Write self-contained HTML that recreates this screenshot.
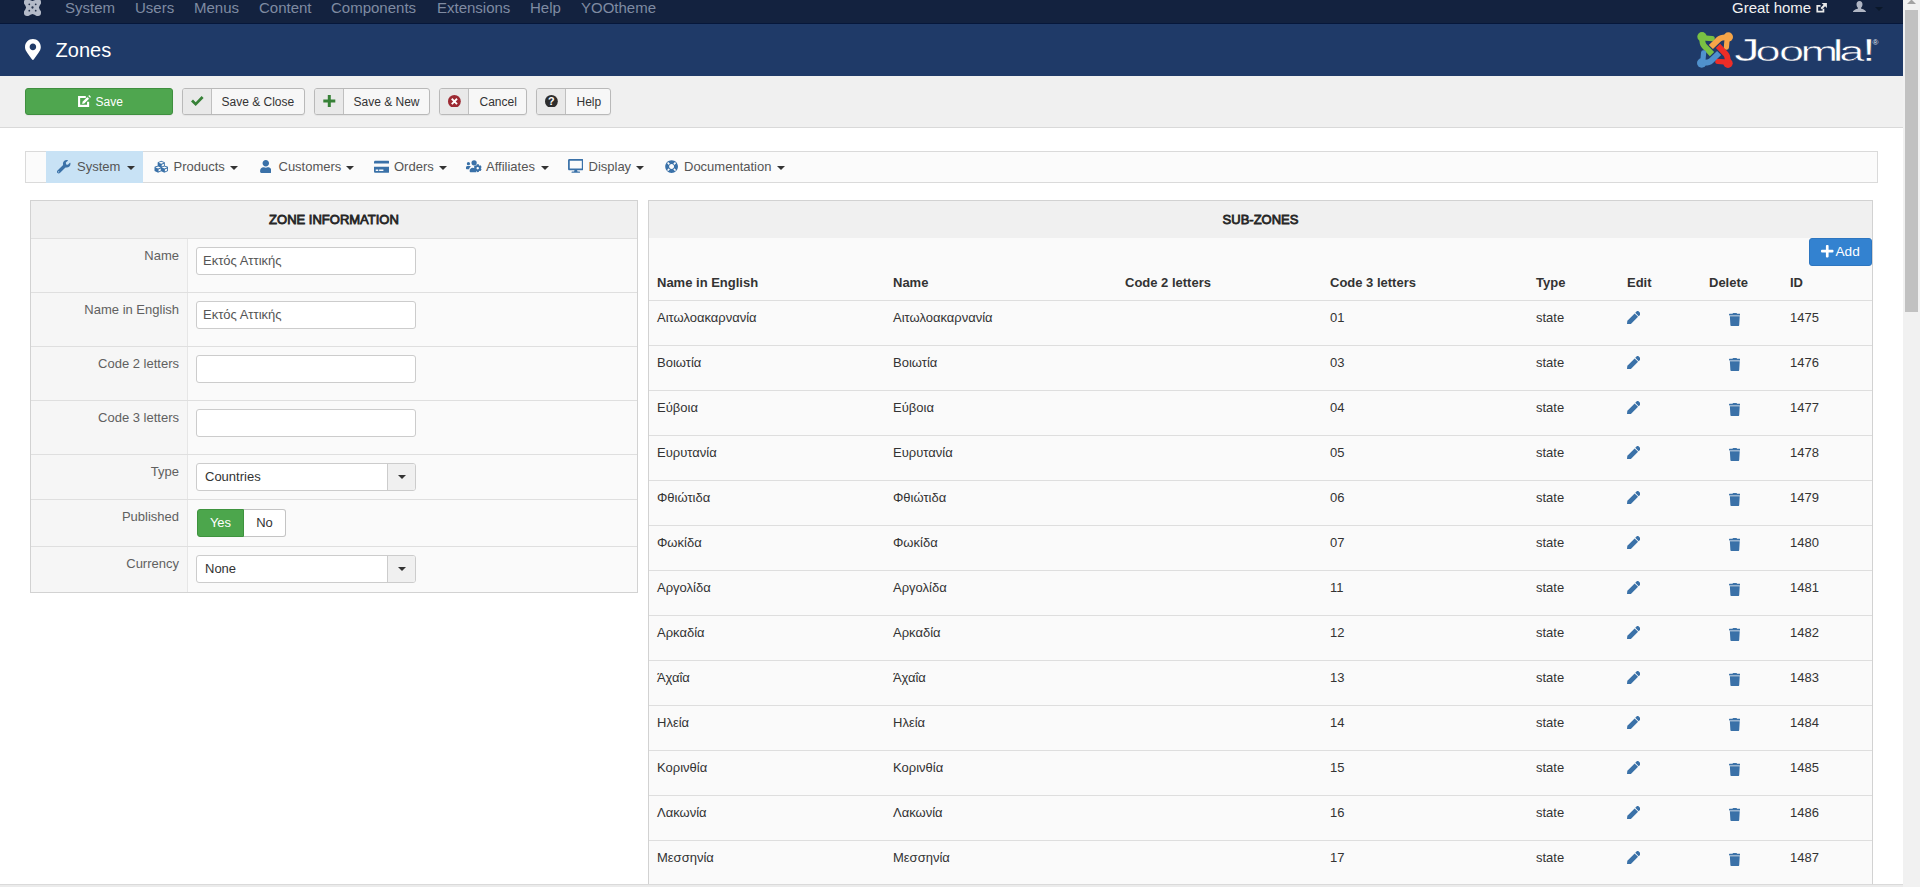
<!DOCTYPE html>
<html lang="en">
<head>
<meta charset="utf-8">
<title>Zones</title>
<style>
*{box-sizing:border-box;margin:0;padding:0}
html,body{width:1920px;height:887px;overflow:hidden;background:#fff}
body{font-family:"Liberation Sans",sans-serif;font-size:13px;color:#333;position:relative}
.abs{position:absolute}
svg{display:block}
/* top navbar */
#nav{left:0;top:0;width:1903px;height:24px;background:#13223f;border-bottom:1px solid #06173a;overflow:hidden}
#nav span.m{position:absolute;top:-3.2px;font-size:15px;line-height:22px;color:#7f8ba2;white-space:nowrap}
#nav span.w{color:#f2f2f2}
/* header */
#hdr{left:0;top:24px;width:1903px;height:52px;background:#1f3a68}
#hdr h1{position:absolute;left:55.6px;top:13.5px;font-size:20px;line-height:24px;font-weight:normal;color:#fff}
/* toolbar */
#tb{left:0;top:76px;width:1903px;height:52px;background:#f0f0f0;border-bottom:1px solid #d9d9d9}
.btn{position:absolute;top:12px;height:27px;border:1px solid #b9b9b9;border-radius:3px;background:#f7f7f7;font-size:12px;line-height:25px;color:#333;white-space:nowrap;box-shadow:0 1px 1px rgba(0,0,0,.05)}
.btn .ic{position:absolute;left:0;top:0;width:29px;height:25px;background:#e9e9e9;border-right:1px solid #bfbfbf;border-radius:2px 0 0 2px}
.btn .tx{position:absolute;top:1px}
.btn svg{position:absolute}
/* submenu */
#sub{left:25px;top:151px;width:1853px;height:32px;background:#fbfbfb;border:1px solid #dadada}
#sub .act{position:absolute;left:20px;top:-1px;width:97px;height:32px;background:#c8e2f5}
#sub .it{position:absolute;top:-0.5px;line-height:30px;font-size:13px;color:#555;white-space:nowrap}
#sub svg{position:absolute;fill:#3a71a8}
.caret{position:absolute;width:0;height:0;border-left:4px solid transparent;border-right:4px solid transparent;border-top:4px solid #333}
/* panels */
.panel{background:#fafafa;border:1px solid #d2d2d2}
.ph{height:37px;background:#f0f0f0;text-align:center;font-weight:normal;-webkit-text-stroke:0.8px #262626;font-size:13px;line-height:37px;color:#262626}
#lp{left:30px;top:200px;width:608px;height:393px}
#lp .row{position:relative;border-top:1px solid #dfdfdf}
#lp .lab{position:absolute;left:0;top:0;width:157px;height:100%;background:#f6f6f6;border-right:1px solid #e6e6e6;color:#606060;font-size:13px}
#lp .lab span{position:absolute;right:8px;top:9px;line-height:16px;white-space:nowrap}
.inp{position:absolute;left:165px;top:8px;width:220px;height:28px;border:1px solid #ccc;border-radius:3px;background:#fff;font-size:13px;line-height:26px;padding-left:6px;color:#555}
.sel{position:absolute;left:165px;top:8px;width:220px;height:28px;border:1px solid #ccc;border-radius:3px;background:#fff;font-size:13px;line-height:26px;padding-left:8px;color:#333}
.sel i{position:absolute;right:0;top:0;width:28px;height:26px;border-left:1px solid #ccc;background:#f0f0f0;border-radius:0 2px 2px 0}
.sel i:after{content:"";position:absolute;left:10px;top:11px;border-left:4px solid transparent;border-right:4px solid transparent;border-top:4px solid #333}
.tog{position:absolute;left:166px;top:9px;height:28px;font-size:13px;line-height:26px;text-align:center}
.tog b{position:absolute;top:0;height:28px;font-weight:normal}
.tog .y{left:0;width:47px;background:#4ca64c;border:1px solid #3e933e;border-radius:3px 0 0 3px;color:#fff}
.tog .n{left:47px;width:42px;background:#fff;border:1px solid #c4c4c4;border-left:0;border-radius:0 3px 3px 0;color:#333}
#rp{left:648px;top:200px;width:1225px;height:700px}
#rp table{position:absolute;left:0;top:61px;width:1223px;border-collapse:collapse;table-layout:fixed}
#rp th{height:38px;text-align:left;font-size:13px;font-weight:bold;color:#333;padding:4px 0 0 8px;vertical-align:middle}
#rp td{height:45px;border-top:1px solid #dedede;font-size:13px;color:#333;padding:8px 0 0 8px;vertical-align:top;line-height:18px}
#rp td svg{fill:#3a71a8}
#rp svg.pen{width:13.5px;height:13.5px;margin:2px 0 0 -0.2px}
#rp svg.bin{width:11.6px;height:13.2px;margin:4px 0 0 19.7px}
#add{position:absolute;left:1160px;top:37px;width:63px;height:28px;background:#3382d0;border:1px solid #2d76c0;border-radius:3px;color:#fff;font-size:13.6px;line-height:26px;z-index:2}
#add svg{position:absolute;left:11px;top:4.600px;width:12.500px;height:14.300px;fill:#fff}
#add span{position:absolute;left:25.500px;top:-0.500px}
/* scrollbar */
#sb{left:1903px;top:0;width:17px;height:887px;background:#f1f1f1}
#sb .th{position:absolute;left:2px;top:10px;width:13px;height:302px;background:#c1c1c1}
#status{left:0;top:884px;width:1903px;height:3px;background:#ebebeb;border-top:1px solid #dadada}
</style>
</head>
<body>
<svg width="0" height="0" style="position:absolute;left:-10px;top:-10px" aria-hidden="true">
<defs>
<path id="i-pen" d="M290.74 93.24l128.02 128.02-277.99 277.99-114.14 12.6C11.35 513.54-1.56 500.62.14 485.34l12.7-114.22 277.9-277.88zm207.2-19.06l-60.11-60.11c-18.75-18.75-49.16-18.75-67.91 0l-56.55 56.55 128.02 128.02 56.55-56.55c18.75-18.76 18.75-49.16 0-67.91z"/>
<path id="i-bin" d="M432 32H312l-9.4-18.7A24 24 0 0 0 281.1 0H166.8a23.72 23.72 0 0 0-21.4 13.3L136 32H16A16 16 0 0 0 0 48v32a16 16 0 0 0 16 16h416a16 16 0 0 0 16-16V48a16 16 0 0 0-16-16zM53.2 467a48 48 0 0 0 47.9 45h245.8a48 48 0 0 0 47.9-45L416 128H32z"/>
<path id="i-wrench" d="M507.73 109.1c-2.24-9.03-13.54-12.09-20.12-5.51l-74.36 74.36-67.88-11.31-11.31-67.88 74.36-74.36c6.62-6.62 3.43-17.9-5.66-20.16-47.38-11.74-99.55.91-136.58 37.93-39.64 39.64-50.55 97.1-34.05 147.2L18.74 402.76c-24.99 24.99-24.99 65.51 0 90.5 24.99 24.99 65.51 24.99 90.5 0l213.21-213.21c50.12 16.71 107.47 5.68 147.37-34.22 37.07-37.07 49.7-89.32 37.91-136.73zM64 472c-13.25 0-24-10.75-24-24 0-13.26 10.75-24 24-24s24 10.74 24 24c0 13.25-10.75 24-24 24z"/>
<path id="i-cubes" d="M488.6 250.2L392 214V105.5c0-15-9.3-28.4-23.4-33.7l-100-37.5c-8.1-3.1-17.1-3.1-25.3 0l-100 37.5c-14.1 5.3-23.4 18.7-23.4 33.7V214l-96.6 36.2C9.3 255.5 0 268.9 0 283.9V394c0 13.6 7.7 26.1 19.9 32.2l100 50c10.1 5.1 22.1 5.1 32.2 0l103.9-52 103.9 52c10.1 5.1 22.1 5.1 32.2 0l100-50c12.2-6.1 19.9-18.6 19.9-32.2V283.9c0-15-9.3-28.4-23.4-33.7zM358 214.8l-85 31.9v-68.2l85-37v73.3zM154 104.1l102-38.2 102 38.2v.6l-102 41.4-102-41.4v-.6zm84 291.1l-85 42.5v-79.1l85-38.8v75.4zm0-112l-102 41.4-102-41.4v-.6l102-38.2 102 38.2v.6zm240 112l-85 42.5v-79.1l85-38.8v75.4zm0-112l-102 41.4-102-41.4v-.6l102-38.2 102 38.2v.6z"/>
<path id="i-user" d="M224 256c70.7 0 128-57.3 128-128S294.7 0 224 0 96 57.3 96 128s57.3 128 128 128zm89.6 32h-16.7c-22.2 10.2-46.9 16-72.9 16s-50.6-5.8-72.9-16h-16.7C60.2 288 0 348.2 0 422.4V464c0 26.5 21.5 48 48 48h352c26.5 0 48-21.5 48-48v-41.6c0-74.2-60.2-134.400-134.400-134.400z"/>
<path id="i-card" d="M0 432c0 26.5 21.5 48 48 48h480c26.5 0 48-21.5 48-48V256H0v176zm192-68c0-6.600 5.400-12 12-12h136c6.600 0 12 5.400 12 12v40c0 6.600-5.400 12-12 12H204c-6.600 0-12-5.400-12-12v-40zm-128 0c0-6.600 5.400-12 12-12h72c6.600 0 12 5.400 12 12v40c0 6.600-5.400 12-12 12H76c-6.600 0-12-5.400-12-12v-40zM576 80v48H0V80c0-26.500 21.500-48 48-48h480c26.500 0 48 21.500 48 48z"/>
<path id="i-desktop" d="M528 0H48C21.500 0 0 21.500 0 48v320c0 26.500 21.500 48 48 48h192l-16 48h-72c-13.300 0-24 10.700-24 24s10.700 24 24 24h272c13.300 0 24-10.700 24-24s-10.700-24-24-24h-72l-16-48h192c26.500 0 48-21.500 48-48V48c0-26.500-21.500-48-48-48zm-16 352H64V64h448v288z"/>
<path id="i-ring" d="M256 8C119.033 8 8 119.033 8 256s111.033 248 248 248 248-111.033 248-248S392.967 8 256 8zm173.696 119.559l-63.399 63.399c-10.987-18.559-26.670-34.252-45.255-45.255l63.399-63.399a218.396 218.396 0 0 1 45.255 45.255zM256 352c-53.019 0-96-42.981-96-96s42.981-96 96-96 96 42.981 96 96-42.981 96-96 96zM127.559 82.304l63.399 63.399c-18.559 10.987-34.252 26.670-45.255 45.255l-63.399-63.399a218.372 218.372 0 0 1 45.255-45.255zM82.304 384.441l63.399-63.399c10.987 18.559 26.670 34.252 45.255 45.255l-63.399 63.399a218.396 218.396 0 0 1-45.255-45.255zm302.137 45.255l-63.399-63.399c18.559-10.987 34.252-26.670 45.255-45.255l63.399 63.399a218.403 218.403 0 0 1-45.255 45.255z"/>
<path id="i-marker" d="M172.268 501.67C26.970 291.031 0 269.413 0 192 0 85.961 85.961 0 192 0s192 85.961 192 192c0 77.413-26.970 99.031-172.268 309.670-9.535 13.774-29.930 13.773-39.464 0zM192 272c44.183 0 80-35.817 80-80s-35.817-80-80-80-80 35.817-80 80 35.817 80 80 80z"/>
<path id="i-plus" d="M416 208H272V64c0-17.670-14.330-32-32-32h-32c-17.670 0-32 14.330-32 32v144H32c-17.670 0-32 14.330-32 32v32c0 17.670 14.330 32 32 32h144v144c0 17.670 14.330 32 32 32h32c17.670 0 32-14.330 32-32V304h144c17.670 0 32-14.330 32-32v-32c0-17.670-14.330-32-32-32z"/>
<!-- users-cog approximation: viewBox 0 0 640 512 -->
<g id="i-ucog">
<circle cx="96" cy="144" r="64"/>
<circle cx="320" cy="112" r="104"/>
<path d="M32 240h128c14 0 27 5 37 13-38 22-62 62-66 107H32c-18 0-32-14-32-32v-24c0-35 29-64 64-64z" transform="translate(-8 0)"/>
<path d="M180 480c-20 0-36-16-36-36v-22c0-66 54-120 120-120h8c15 7 31 11 48 11 8 0 16-1 24-3 5 40 24 76 52 102-6 24 0 50 14 68z"/>
<path d="M610 353l-22-13c2-12 2-24 0-36l22-13c5-3 7-9 5-14-8-24-21-46-38-64-4-4-10-5-14-2l-22 13c-9-8-20-14-31-18v-26c0-6-4-11-9-12-25-6-50-5-74 0-5 1-9 6-9 12v26c-11 4-22 10-31 18l-22-13c-5-3-11-2-14 2-17 18-30 40-38 64-2 5 0 11 5 14l22 13c-2 12-2 24 0 36l-22 13c-5 3-7 9-5 14 8 24 21 46 38 64 4 4 10 5 14 2l22-13c9 8 20 14 31 18v26c0 6 4 11 9 12 25 6 50 5 74 0 5-1 9-6 9-12v-26c11-4 22-10 31-18l22 13c5 3 11 2 14-2 17-18 30-40 38-64 2-5 0-11-5-14zM464 370c-26 0-48-22-48-48s22-48 48-48 48 22 48 48-22 48-48 48z"/>
</g>
<!-- joomla mark piece (36x36 box) -->
<g id="j-piece"><circle cx="5" cy="4.7" r="4.7" stroke="none"/><path d="M6 5.800L15.200 6.600" fill="none" stroke-width="5.200" stroke-linecap="round"/><path d="M5.400 6C5.100 10 5.300 12 7.200 14L15 22.100" fill="none" stroke-width="5.900" stroke-linecap="butt" stroke-linejoin="round"/></g>
<g id="j-mono">
<g fill="#b4bbc9"><circle cx="3.200" cy="3.200" r="3.200"/><circle cx="13.800" cy="3.200" r="3.200"/><circle cx="3.200" cy="13.800" r="3.200"/><circle cx="13.800" cy="13.800" r="3.200"/><path d="M3.200 0L8.500 2.100 13.800 0 17 3.200 14.900 8.500 17 13.800 13.800 17 8.500 14.900 3.200 17 0 13.800 2.100 8.500 0 3.200Z"/></g>
<g fill="#25334d"><circle cx="8.500" cy="8.500" r="1.150"/><circle cx="5.300" cy="5.300" r=".9"/><circle cx="11.700" cy="5.300" r=".9"/><circle cx="5.300" cy="11.700" r=".9"/><circle cx="11.700" cy="11.700" r=".9"/></g>
</g>
</defs>
</svg>

<div id="nav" class="abs">
<svg class="abs" style="left:24.400px;top:-1.300px;width:17px;height:17px" viewBox="0 0 17 17"><use href="#j-mono"/></svg>
<span class="m" style="left:65px">System</span>
<span class="m" style="left:135px">Users</span>
<span class="m" style="left:194px">Menus</span>
<span class="m" style="left:259px">Content</span>
<span class="m" style="left:331px">Components</span>
<span class="m" style="left:437px">Extensions</span>
<span class="m" style="left:530px">Help</span>
<span class="m" style="left:581px">YOOtheme</span>
<span class="m w" style="left:1732px">Great home</span>
<svg class="abs" style="left:1816px;top:3px;width:10.900px;height:10px" viewBox="0 0 12 11"><path d="M8.2 6.2V9.6H1.4V3.2H5" fill="none" stroke="#e9e9e9" stroke-width="1.9"/><path d="M6.2 0H12V5.6L10 3.7 6.6 7.1 5 5.5 8.3 2z" fill="#e9e9e9"/></svg>
<svg class="abs" style="left:1852.6px;top:0.6px;width:13px;height:11.6px" viewBox="0 0 13 11.6"><path d="M6.5 0C8.4 0 9.5 1.4 9.5 3.3 9.5 5 8.7 6.3 8 6.9V7.6C9.5 8.2 13 9.2 13 11V11.6H0V11C0 9.200 3.500 8.200 5 7.600V6.900C4.300 6.300 3.500 5 3.500 3.300 3.500 1.400 4.600 0 6.500 0Z" fill="#b0b6c4"/></svg>
<div class="caret" style="left:1875px;top:6.600px;border-width:4.400px;border-bottom-width:0;border-top-color:#0a1729"></div>
</div>
<div id="hdr" class="abs">
<svg class="abs" style="left:24.9px;top:15px;width:15.8px;height:21px;fill:#fff" viewBox="0 0 384 512"><use href="#i-marker"/></svg>
<h1>Zones</h1>
<svg class="abs" style="left:1697px;top:8px;width:36px;height:36px" viewBox="0 0 36 36">
<g fill="#7ac143" stroke="#7ac143"><use href="#j-piece"/></g>
<g fill="#f6a548" stroke="#f6a548"><use href="#j-piece" transform="rotate(90 18 18)"/></g>
<g fill="#ee2d27" stroke="#ee2d27"><use href="#j-piece" transform="rotate(180 18 18)"/></g>
<g fill="#5091cd" stroke="#5091cd"><use href="#j-piece" transform="rotate(270 18 18)"/></g>
</svg>
<svg class="abs" style="left:1730px;top:0;width:160px;height:52px" viewBox="0 0 160 52"><text transform="scale(1.66 1)" x="2.41 15.33 29.46 42.47 61.76 65.84 79.29" y="36.6 36.63 36.63 36.9 36.9 36.63 36.9" font-family="Liberation Sans, sans-serif" font-size="27.25" fill="#fff" stroke="#1f3a68" stroke-width="0.45"><tspan font-size="31.4">J</tspan>oom<tspan font-size="30.2">l</tspan>a<tspan font-size="31.8">!</tspan></text><text x="142.4" y="21.2" font-family="Liberation Sans, sans-serif" font-size="8" fill="#e3e7ee">®</text></svg>
</div>
<div id="tb" class="abs">
<div class="btn" style="left:25px;width:148px;background:#4fa64f;border-color:#3f8f3f;color:#fff"><svg style="left:51.500px;top:6.300px;width:13px;height:12px" viewBox="0 0 13 12"><path d="M7.800 2H1.100V10.900H10.100V6.800" fill="none" stroke="#fff" stroke-width="2.100"/><path d="M9.300 1.800L11.300 3.800 6.300 8.800 3.800 9.300 4.300 6.800Z" fill="#fff" stroke="#4fa64f" stroke-width=".5"/><path d="M10.300 1L11.200 .1 13 1.900 12.100 2.800Z" fill="#fff"/></svg><span class="tx" style="left:69.500px">Save</span></div>
<div class="btn" style="left:182px;width:123px"><span class="ic"></span><svg style="left:8.200px;top:7.400px;width:12.600px;height:10px" viewBox="0 0 12.600 10"><path d="M0 5.500L2 3.500 4.700 6.200 10.600 0 12.600 2 4.700 10Z" fill="#378137"/></svg><span class="tx" style="left:38.5px">Save &amp; Close</span></div>
<div class="btn" style="left:314px;width:116px"><span class="ic"></span><svg style="left:8.200px;top:6px;width:12.600px;height:12px" viewBox="0 0 12 12"><path d="M4.500 0H7.500V4.500H12V7.500H7.500V12H4.500V7.500H0V4.500H4.500Z" fill="#378137"/></svg><span class="tx" style="left:38.5px">Save &amp; New</span></div>
<div class="btn" style="left:439px;width:88px"><span class="ic"></span><svg style="left:8.300px;top:5.700px;width:12.800px;height:12.800px" viewBox="0 0 16 16"><circle cx="8" cy="8" r="8" fill="#9d2a33"/><path d="M4.700 4.700L11.300 11.300M11.300 4.700L4.700 11.300" stroke="#fff" stroke-width="2.300" fill="none"/></svg><span class="tx" style="left:39.500px">Cancel</span></div>
<div class="btn" style="left:536px;width:75px"><span class="ic"></span><svg style="left:7.900px;top:5.700px;width:12.800px;height:12.800px" viewBox="0 0 16 16"><circle cx="8" cy="8" r="8" fill="#2d2d2d"/><text x="8" y="12.800" text-anchor="middle" font-family="Liberation Sans, sans-serif" font-weight="bold" font-size="13.500" fill="#fff">?</text></svg><span class="tx" style="left:39.500px">Help</span></div>
</div>
<div id="sub" class="abs">
<div class="act"></div>
<svg style="left:31px;top:8px;width:13.500px;height:13.500px" viewBox="0 0 512 512"><use href="#i-wrench"/></svg>
<span class="it" style="left:51px">System</span><div class="caret" style="left:100.500px;top:14px"></div>
<svg style="left:127.500px;top:8px;width:14.500px;height:13.500px" viewBox="0 0 512 512"><use href="#i-cubes"/></svg>
<span class="it" style="left:147.500px">Products</span><div class="caret" style="left:204px;top:14px"></div>
<svg style="left:233.700px;top:8px;width:11.600px;height:13px" viewBox="0 0 448 512"><use href="#i-user"/></svg>
<span class="it" style="left:252.500px">Customers</span><div class="caret" style="left:320px;top:14px"></div>
<svg style="left:347.700px;top:7.500px;width:15.400px;height:13.700px" viewBox="0 0 576 512"><use href="#i-card"/></svg>
<span class="it" style="left:368px">Orders</span><div class="caret" style="left:413px;top:14px"></div>
<svg style="left:439.800px;top:8px;width:16.200px;height:13px" viewBox="0 0 640 512"><use href="#i-ucog"/></svg>
<span class="it" style="left:460px">Affiliates</span><div class="caret" style="left:515px;top:14px"></div>
<svg style="left:541.800px;top:7.200px;width:15.600px;height:13.800px" viewBox="0 0 576 512"><use href="#i-desktop"/></svg>
<span class="it" style="left:562.500px">Display</span><div class="caret" style="left:610px;top:14px"></div>
<svg style="left:638.800px;top:8px;width:13.200px;height:13.200px" viewBox="0 0 512 512"><use href="#i-ring"/></svg>
<span class="it" style="left:658px">Documentation</span><div class="caret" style="left:751px;top:14px"></div>
</div>
<div id="lp" class="abs panel">
<div class="ph">ZONE INFORMATION</div>
<div class="row" style="height:54px"><div class="lab"><span>Name</span></div><div class="inp">Εκτός Αττικής</div></div>
<div class="row" style="height:54px"><div class="lab"><span>Name in English</span></div><div class="inp">Εκτός Αττικής</div></div>
<div class="row" style="height:54px"><div class="lab"><span>Code 2 letters</span></div><div class="inp"></div></div>
<div class="row" style="height:54px"><div class="lab"><span>Code 3 letters</span></div><div class="inp"></div></div>
<div class="row" style="height:45px"><div class="lab"><span>Type</span></div><div class="sel">Countries<i></i></div></div>
<div class="row" style="height:47px"><div class="lab"><span>Published</span></div><div class="tog"><b class="y">Yes</b><b class="n">No</b></div></div>
<div class="row" style="height:46px"><div class="lab"><span>Currency</span></div><div class="sel">None<i></i></div></div>
</div>
<div id="rp" class="abs panel">
<div class="ph">SUB-ZONES</div>
<div id="add"><svg viewBox="0 0 448 512"><use href="#i-plus"/></svg><span>Add</span></div>
<table>
<colgroup><col style="width:236px"><col style="width:232px"><col style="width:205px"><col style="width:206px"><col style="width:91px"><col style="width:82px"><col style="width:81px"><col></colgroup>
<thead><tr><th>Name in English</th><th>Name</th><th>Code 2 letters</th><th>Code 3 letters</th><th>Type</th><th>Edit</th><th>Delete</th><th>ID</th></tr></thead>
<tbody>
<tr><td>Αιτωλοακαρνανία</td><td>Αιτωλοακαρνανία</td><td></td><td>01</td><td>state</td><td><svg class="pen" viewBox="0 0 512 512"><use href="#i-pen"/></svg></td><td><svg class="bin" viewBox="0 0 448 512"><use href="#i-bin"/></svg></td><td>1475</td></tr>
<tr><td>Βοιωτία</td><td>Βοιωτία</td><td></td><td>03</td><td>state</td><td><svg class="pen" viewBox="0 0 512 512"><use href="#i-pen"/></svg></td><td><svg class="bin" viewBox="0 0 448 512"><use href="#i-bin"/></svg></td><td>1476</td></tr>
<tr><td>Εύβοια</td><td>Εύβοια</td><td></td><td>04</td><td>state</td><td><svg class="pen" viewBox="0 0 512 512"><use href="#i-pen"/></svg></td><td><svg class="bin" viewBox="0 0 448 512"><use href="#i-bin"/></svg></td><td>1477</td></tr>
<tr><td>Ευρυτανία</td><td>Ευρυτανία</td><td></td><td>05</td><td>state</td><td><svg class="pen" viewBox="0 0 512 512"><use href="#i-pen"/></svg></td><td><svg class="bin" viewBox="0 0 448 512"><use href="#i-bin"/></svg></td><td>1478</td></tr>
<tr><td>Φθιώτιδα</td><td>Φθιώτιδα</td><td></td><td>06</td><td>state</td><td><svg class="pen" viewBox="0 0 512 512"><use href="#i-pen"/></svg></td><td><svg class="bin" viewBox="0 0 448 512"><use href="#i-bin"/></svg></td><td>1479</td></tr>
<tr><td>Φωκίδα</td><td>Φωκίδα</td><td></td><td>07</td><td>state</td><td><svg class="pen" viewBox="0 0 512 512"><use href="#i-pen"/></svg></td><td><svg class="bin" viewBox="0 0 448 512"><use href="#i-bin"/></svg></td><td>1480</td></tr>
<tr><td>Αργολίδα</td><td>Αργολίδα</td><td></td><td>11</td><td>state</td><td><svg class="pen" viewBox="0 0 512 512"><use href="#i-pen"/></svg></td><td><svg class="bin" viewBox="0 0 448 512"><use href="#i-bin"/></svg></td><td>1481</td></tr>
<tr><td>Αρκαδία</td><td>Αρκαδία</td><td></td><td>12</td><td>state</td><td><svg class="pen" viewBox="0 0 512 512"><use href="#i-pen"/></svg></td><td><svg class="bin" viewBox="0 0 448 512"><use href="#i-bin"/></svg></td><td>1482</td></tr>
<tr><td>Άχαΐα</td><td>Άχαΐα</td><td></td><td>13</td><td>state</td><td><svg class="pen" viewBox="0 0 512 512"><use href="#i-pen"/></svg></td><td><svg class="bin" viewBox="0 0 448 512"><use href="#i-bin"/></svg></td><td>1483</td></tr>
<tr><td>Ηλεία</td><td>Ηλεία</td><td></td><td>14</td><td>state</td><td><svg class="pen" viewBox="0 0 512 512"><use href="#i-pen"/></svg></td><td><svg class="bin" viewBox="0 0 448 512"><use href="#i-bin"/></svg></td><td>1484</td></tr>
<tr><td>Κορινθία</td><td>Κορινθία</td><td></td><td>15</td><td>state</td><td><svg class="pen" viewBox="0 0 512 512"><use href="#i-pen"/></svg></td><td><svg class="bin" viewBox="0 0 448 512"><use href="#i-bin"/></svg></td><td>1485</td></tr>
<tr><td>Λακωνία</td><td>Λακωνία</td><td></td><td>16</td><td>state</td><td><svg class="pen" viewBox="0 0 512 512"><use href="#i-pen"/></svg></td><td><svg class="bin" viewBox="0 0 448 512"><use href="#i-bin"/></svg></td><td>1486</td></tr>
<tr><td>Μεσσηνία</td><td>Μεσσηνία</td><td></td><td>17</td><td>state</td><td><svg class="pen" viewBox="0 0 512 512"><use href="#i-pen"/></svg></td><td><svg class="bin" viewBox="0 0 448 512"><use href="#i-bin"/></svg></td><td>1487</td></tr>
</tbody>
</table>
</div>
<div id="sb" class="abs"><svg class="abs" style="left:4px;top:-3px;width:9px;height:8px" viewBox="0 0 9 8"><path d="M0 7L4.500 2.500 9 7Z" fill="#a3a3a3"/></svg><div class="th"></div></div>
<div id="status" class="abs"></div>

</body>
</html>
